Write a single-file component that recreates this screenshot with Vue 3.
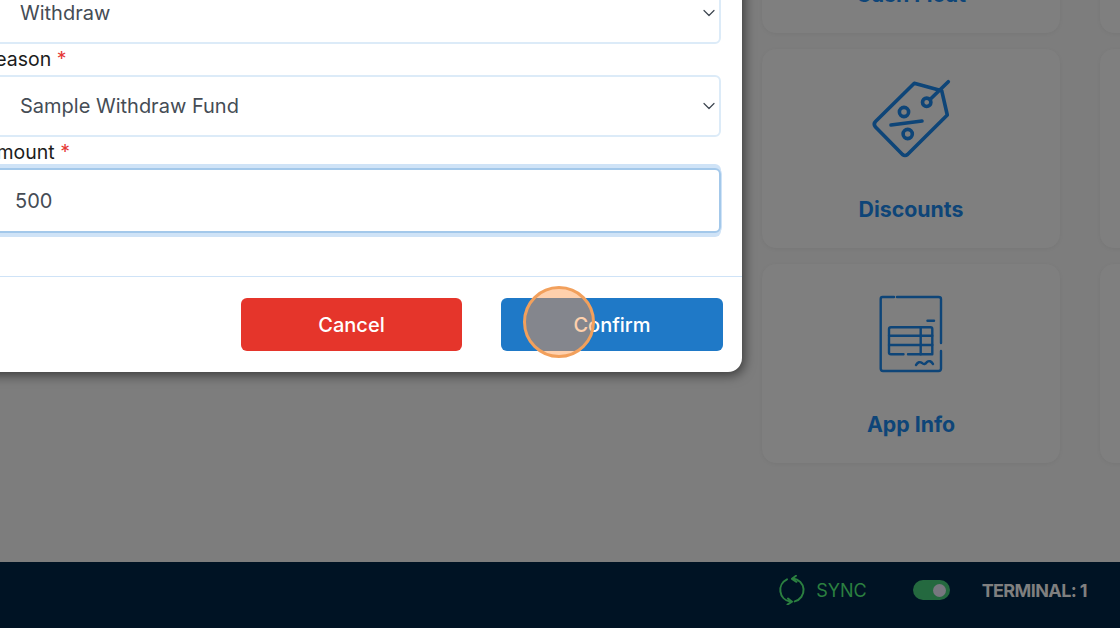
<script setup>
const fields = [
  { label: "Type", kind: "select", value: "Withdraw" },
  { label: "Reason", kind: "select", value: "Sample Withdraw Fund" },
];
</script>

<template>
  <div class="screen">
    <main class="content">
      <div class="cards">
        <div class="card">
          <div class="card-icon"></div>
          <div class="card-label">Cash Float</div>
        </div>
        <div class="card"></div>
        <div class="card">
          <svg class="card-icon" viewBox="0 0 82 82" fill="none" stroke="#0e4578" stroke-width="3.6" stroke-linecap="round" stroke-linejoin="round">
            <path d="M44.3 5.3 71.700 12.700 77.300 37 37.500 76.500Q35 78.500 32.500 76.500L5.500 49Q3 46 5.500 43.500Z" />
            <circle cx="56.700" cy="24.300" r="4.200" />
            <path d="M60 21.500 78.300 3.700" />
            <circle cx="34" cy="34" r="4.600" />
            <circle cx="37.700" cy="56" r="4.600" />
            <path d="M21 47 52 43" />
          </svg>
          <div class="card-label">Discounts</div>
        </div>
        <div class="card"></div>
        <div class="card">
          <svg class="card-icon" viewBox="0 0 82 82" fill="none" stroke="#0e4578" stroke-width="2.4" stroke-linecap="round" stroke-linejoin="round">
            <path d="M24 4H12.500Q10.700 4 10.700 6V75.500Q10.700 78 13 78H68.500Q71 78 71 75.500V58" />
            <path d="M27 4H68.500Q71 4 71 6V50" />
            <path d="M57.500 27.700H64" />
            <path d="M33.500 61.300H21Q19 61.300 19 59.500V36Q19 34.300 21 34.300H60.500Q62.300 34.300 62.300 36V61.300H38" />
            <path d="M19 42.700H62.300M19 52H62.300M50.700 34.300V61.300" />
            <path d="M46 72Q49 67.500 52 70Q54.500 72.500 57 69Q60 66.500 63 71" />
          </svg>
          <div class="card-label">App Info</div>
        </div>
        <div class="card"></div>
      </div>
    </main>

    <footer class="status-bar">
      <div class="sync">
        <svg class="sync-icon" viewBox="0 0 30 30" fill="none" stroke="#2b8040" stroke-width="2" stroke-linecap="round" stroke-linejoin="round">
          <path d="M16 3.400A11.700 11.700 0 0 1 17.700 26.400" />
          <path d="M19 .8 15 3.800 19.500 6.800" />
          <path d="M13 26.500A11.700 11.700 0 0 1 10 4.400" />
          <path d="M11 23.500 15 26.700 10.500 29.500" />
        </svg>
        <span>SYNC</span>
      </div>
      <div class="toggle"><span class="knob"></span></div>
      <div class="terminal">TERMINAL: 1</div>
    </footer>

    <section class="modal">
      <div class="modal-body">
        <div v-for="field in fields" :key="field.label" class="field">
          <label class="field-label">{{ field.label }} <span class="required">*</span></label>
          <div class="select-wrap">
            <select class="control select">
              <option>{{ field.value }}</option>
            </select>
            <svg class="chevron" viewBox="0 0 12 8" fill="none" stroke="#3d4650" stroke-width="1.200" stroke-linecap="round" stroke-linejoin="round">
              <path d="M1 1.500 6 6.500 11 1.500" />
            </svg>
          </div>
        </div>
        <div class="field">
          <label class="field-label">Amount <span class="required">*</span></label>
          <input class="control amount" value="500" />
        </div>
      </div>
      <div class="modal-footer">
        <button class="btn btn-cancel">Cancel</button>
        <button class="btn btn-confirm">Confirm</button>
      </div>
    </section>

    <div class="click-marker"></div>
  </div>
</template>

<style>
html,
body {
  margin: 0;
  overflow: hidden;
}
</style>

<style scoped>
.screen {
  position: relative;
  width: 1120px;
  height: 628px;
  overflow: hidden;
  display: flex;
  flex-direction: column;
  background: #7d7d7d;
  font-family: Inter, "Open Sans", sans-serif;
}

/* page behind the dialog */
.content {
  flex: 1;
  min-height: 0;
  overflow: hidden;
}

.cards {
  display: grid;
  grid-template-columns: 298px 298px;
  grid-auto-rows: 199px;
  gap: 16px 40px;
  margin: -166px 0 0 762px;
}

.card {
  display: flex;
  flex-direction: column;
  align-items: center;
  background: #7f7f7f;
  border-radius: 14px;
  box-shadow: 0 1px 4px rgba(0, 0, 0, 0.05);
}

.card-icon {
  width: 82px;
  height: 82px;
  margin-top: 29px;
}

.card-label {
  margin-top: 34px;
  font-size: 21.300px;
  line-height: 30px;
  font-weight: 700;
  color: #0e4578;
}

/* bottom bar */
.status-bar {
  flex: none;
  height: 66px;
  display: flex;
  align-items: center;
  justify-content: flex-end;
  padding: 0 33px 10px 0;
  box-sizing: border-box;
  background: #001324;
}

.sync {
  display: flex;
  align-items: center;
  gap: 9px;
  font-size: 18px;
  color: #2b8040;
}

.sync-icon {
  width: 30px;
  height: 30px;
}

.toggle {
  width: 37px;
  height: 20px;
  display: flex;
  align-items: center;
  justify-content: flex-end;
  margin: 0 32px 0 46px;
  padding-right: 4px;
  box-sizing: border-box;
  border-radius: 10px;
  background: #24693f;
}

.knob {
  width: 13px;
  height: 13px;
  border-radius: 50%;
  background: #77777f;
}

.terminal {
  font-size: 18px;
  font-weight: 700;
  letter-spacing: -0.6px;
  color: #7f7f7f;
}

/* dialog */
.modal {
  position: absolute;
  left: -30px;
  bottom: 256px;
  width: 772px;
  background: #fff;
  border-radius: 0 0 14px 14px;
  box-shadow: 2px 3px 12px rgba(0, 0, 0, 0.55);
}

.modal-body {
  padding: 0 21px 43px 20px;
  border-bottom: 1px solid #cfe3f7;
}

.field-label {
  display: block;
  height: 31px;
  margin-left: -7px;
  font-size: 19.500px;
  line-height: 31px;
  color: #1c1c1c;
}

.required {
  color: #e53935;
}

.select-wrap {
  position: relative;
}

.control {
  display: block;
  width: 100%;
  box-sizing: border-box;
  margin: 0;
  font-family: inherit;
  font-size: 20px;
  color: #454c55;
  background: #fff;
  outline: none;
}

.select {
  height: 62px;
  padding: 0 40px 0 28px;
  border: 2px solid #dcebf8;
  border-radius: 6px;
  appearance: none;
}

.chevron {
  position: absolute;
  right: 6px;
  top: 27px;
  width: 12px;
  height: 8px;
}

.amount {
  height: 65px;
  padding: 0 23px;
  border: 2px solid #a3c8ea;
  border-radius: 6px;
  box-shadow: 0 0 0 1px #cfe3f7, 0 4px 0 #cfe3f7, 0 -4px 0 #cfe3f7;
}

.modal-footer {
  display: flex;
  justify-content: flex-end;
  gap: 39px;
  padding: 21px 19px 21px 0;
}

.btn {
  height: 53px;
  border: none;
  border-radius: 6px;
  font-family: inherit;
  font-size: 20px;
  font-weight: 500;
  color: #fff;
}

.btn-cancel {
  width: 221px;
  background: #e5352b;
}

.btn-confirm {
  width: 222px;
  background: #1f79c7;
}

/* tutorial click highlight, sits above the button */
.click-marker {
  position: absolute;
  left: 523px;
  top: 286px;
  width: 72px;
  height: 72px;
  box-sizing: border-box;
  border: 3px solid #f2a05c;
  border-radius: 50%;
  background: rgba(255, 150, 70, 0.45);
}
</style>
